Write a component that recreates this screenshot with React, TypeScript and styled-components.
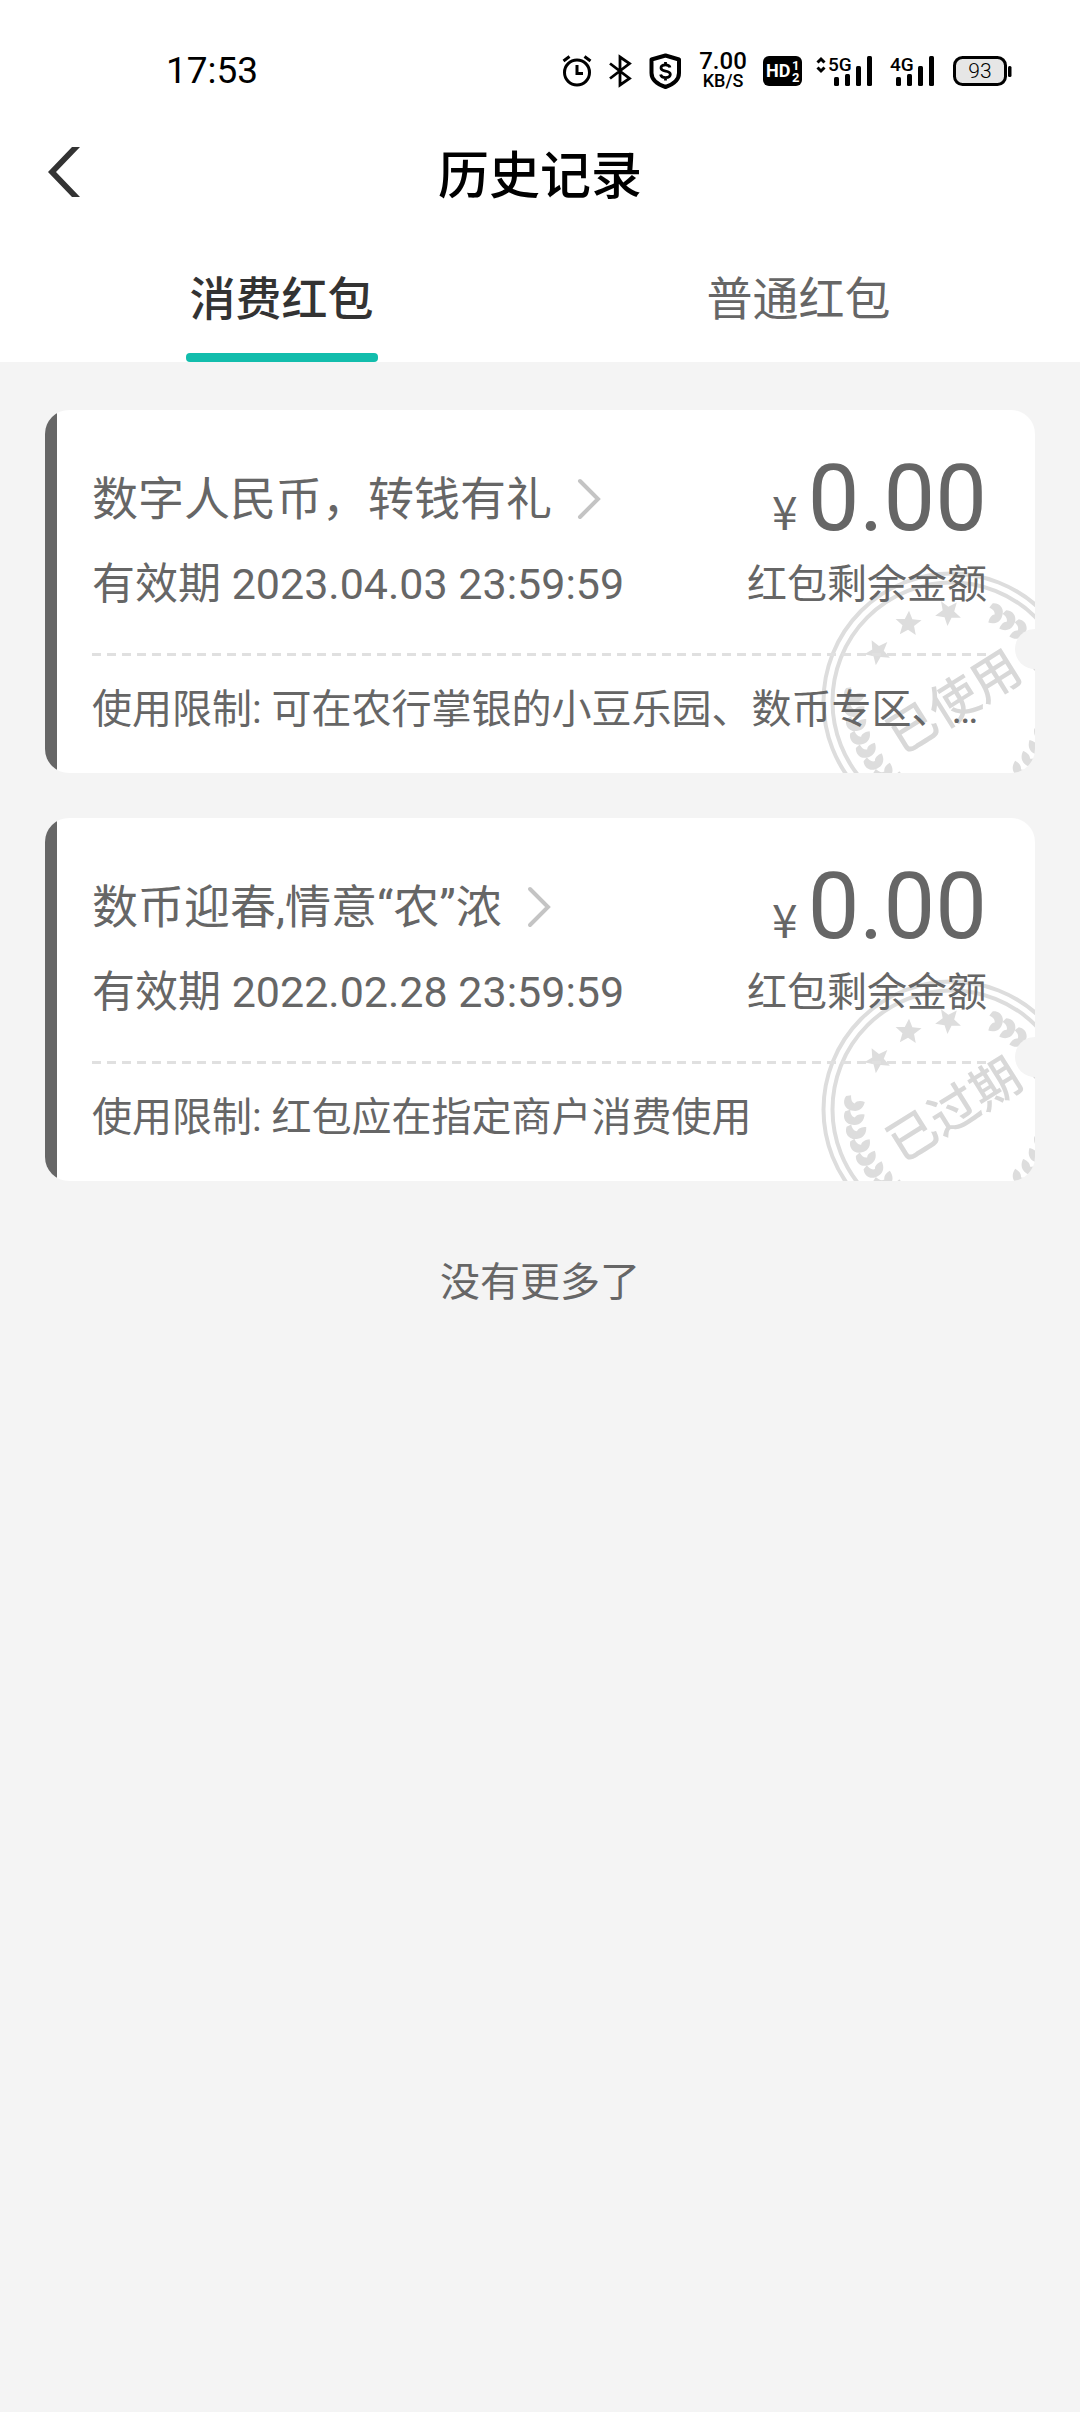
import React, { useState } from "react";
import styled, { createGlobalStyle } from "styled-components";

const sans = `Roboto, "Noto Sans CJK SC", sans-serif`;

const color = {
  page: "#f4f4f4",
  surface: "#ffffff",
  strong: "#333333",
  text: "#666666",
  accent: "#12bdac",
  line: "#e0e0e0",
  stamp: "#dddddd",
  chevron: "#c4c4c4",
};

const GlobalStyle = createGlobalStyle`
  *, *::before, *::after { box-sizing: border-box; }
  body {
    margin: 0;
    background: ${color.page};
    color: ${color.text};
    font-family: ${sans};
  }
  button {
    padding: 0;
    border: 0;
    background: none;
    color: inherit;
    font: inherit;
    cursor: pointer;
  }
  h1, h2, p { margin: 0; font: inherit; }
  svg { display: block; flex: none; overflow: visible; }
`;

const Page = styled.div`
  min-height: 100vh;
`;

const Header = styled.header`
  background: ${color.surface};
`;

const StatusBar = styled.div`
  display: flex;
  align-items: center;
  justify-content: space-between;
  height: 104px;
  padding: 38px 68px 0 166px;
  color: #000;
`;

const Clock = styled.time`
  font-size: 37px;
  line-height: 40px;
`;

const StatusIcons = styled.div`
  display: flex;
  align-items: center;
  gap: 14px;
`;

const Speed = styled.div`
  display: flex;
  flex-direction: column;
  align-items: center;
  width: 50px;
  font-weight: 500;
`;

const SpeedValue = styled.span`
  font-size: 24px;
  line-height: 20px;
`;

const SpeedUnit = styled.span`
  font-size: 18px;
  line-height: 20px;
`;

const NavBar = styled.div`
  display: grid;
  grid-template-columns: 96px 1fr 96px;
  align-items: center;
  height: 136px;
`;

const BackButton = styled.button`
  display: flex;
  align-items: center;
  height: 96px;
  padding-left: 48px;
`;

const Title = styled.h1`
  padding-top: 9px;
  color: #000;
  font-size: 51px;
  font-weight: 500;
  line-height: 72px;
  text-align: center;
`;

const Tabs = styled.div`
  display: flex;
  padding: 0 23px;
`;

const Tab = styled.button<{ $active: boolean }>`
  display: flex;
  flex: 1;
  flex-direction: column;
  align-items: center;
  justify-content: flex-end;
  gap: 18px;
  height: 122px;
  color: ${(p) => (p.$active ? color.strong : color.text)};
  font-size: 46px;
  font-weight: ${(p) => (p.$active ? 500 : 400)};
  line-height: 72px;

  &::after {
    content: "";
    width: 192px;
    height: 9px;
    border-radius: 4px;
    background: ${(p) => (p.$active ? color.accent : "transparent")};
  }
`;

const List = styled.main`
  display: flex;
  flex-direction: column;
  gap: 45px;
  padding: 48px 45px;
`;

const Card = styled.article`
  position: relative;
  overflow: hidden;
  padding: 0 48px 0 47px;
  border-radius: 24px;
  background: linear-gradient(to right, ${color.text} 12px, ${color.surface} 12px);

  &::after {
    content: "";
    position: absolute;
    top: 219px;
    right: -20px;
    width: 40px;
    height: 40px;
    border-radius: 50%;
    background: ${color.page};
  }
`;

const StampLayer = styled.div`
  position: absolute;
  top: 160px;
  right: -48px;
`;

const StampText = styled.text`
  fill: #d8d8d8;
  font-family: ${sans};
  font-size: 49px;
  font-weight: 500;
  text-anchor: middle;
`;

const Summary = styled.div`
  position: relative;
  display: flex;
  justify-content: space-between;
  padding: 53px 0 43px;
`;

const Column = styled.div<{ $end?: boolean }>`
  display: flex;
  flex-direction: column;
  align-items: ${(p) => (p.$end ? "flex-end" : "flex-start")};
  gap: 24px;
`;

const CardTitle = styled.button`
  display: flex;
  align-items: center;
  gap: 24px;
  font-size: 46px;
  line-height: 72px;
`;

const Validity = styled.p`
  font-size: 43px;
  line-height: 51px;
`;

const Amount = styled.p`
  display: flex;
  align-items: baseline;
  gap: 10px;
  height: 72px;
  font-size: 92px;
  line-height: 72px;
`;

const Currency = styled.span`
  font-family: "Noto Sans CJK SC", sans-serif;
  font-size: 46px;
`;

const AmountLabel = styled.p`
  font-size: 40px;
  line-height: 51px;
`;

const Divider = styled.div`
  position: relative;
  height: 3px;
  background: repeating-linear-gradient(
    to right,
    ${color.line} 0 9px,
    transparent 9px 15px
  );
`;

const Limit = styled.p`
  position: relative;
  overflow: hidden;
  padding: 26px 0 35px;
  font-size: 40px;
  line-height: 56px;
  text-overflow: ellipsis;
  white-space: nowrap;
`;

const EndNote = styled.p`
  padding-top: 29px;
  font-size: 40px;
  line-height: 56px;
  text-align: center;
`;

const AlarmIcon = () => (
  <svg width="30" height="32" viewBox="0 0 30 32" fill="none" stroke="#000" strokeWidth="3" aria-hidden="true">
    <circle cx="15" cy="17.5" r="12.5" />
    <path d="M15 10v8.5h6M1.5 6l6-4.500M28.500 6l-6-4.500" />
  </svg>
);

const BluetoothIcon = () => (
  <svg width="28" height="32" viewBox="0 0 28 32" fill="none" stroke="#000" strokeWidth="2.800" aria-hidden="true">
    <path d="M4 8.500L23.500 23.500L14 30V2L23.500 8.500L4 23.500" />
  </svg>
);

const ShieldIcon = () => (
  <svg width="36" height="36" viewBox="0 0 36 36" fill="none" stroke="#000" aria-hidden="true">
    <path d="M17.500 2.500L31 6.500V20C31 27 25 31.500 17.500 34C10 31.500 3.500 27 3.500 20V6.500Z" strokeWidth="4" strokeLinejoin="round" />
    <path d="M22 14.500C21.500 12.500 19.500 11.800 17.500 11.800C15 11.800 13 12.800 13 15C13 19.500 22.300 16.500 22.300 21.300C22.300 23.500 20 24.600 17.500 24.600C15 24.600 13 23.500 12.600 21.500M17.500 9v3M17.500 24.500v3" strokeWidth="2.800" />
  </svg>
);

const StatusText = styled.text`
  font-family: Roboto, sans-serif;
`;

const HdIcon = () => (
  <svg width="40" height="30" viewBox="0 0 40 30" role="img" aria-label="HD 1 2">
    <rect x="1" width="39" height="30" rx="6" fill="#000" />
    <StatusText x="4" y="21" fontSize="18" fontWeight="700" fill="#fff">HD</StatusText>
    <StatusText x="30" y="14" fontSize="13" fontWeight="700" fill="#fff">1</StatusText>
    <StatusText x="30" y="26" fontSize="13" fontWeight="700" fill="#fff">2</StatusText>
  </svg>
);

const SignalIcon = ({ label, arrows }: { label: string; arrows?: boolean }) => {
  const left = arrows ? 18 : 6;
  const width = arrows ? 60 : 46;
  return (
    <svg width={width} height="30" viewBox={`0 0 ${width} 30`} role="img" aria-label={`${label} signal`}>
      {arrows && <path d="M1.500 6.500L5 3L8.500 6.500M1.500 11.500L5 15L8.500 11.500" fill="none" stroke="#000" strokeWidth="3" />}
      <StatusText x={arrows ? 12 : 0} y="15" fontSize="19" fontWeight="500">{label}</StatusText>
      {[9, 12, 20, 30].map((h, i) => (
        <rect key={h} x={left + i * 11} y={30 - h} width="5" height={h} rx="1.500" />
      ))}
    </svg>
  );
};

const BatteryIcon = () => (
  <svg width="62" height="30" viewBox="0 0 62 30" role="img" aria-label="Battery 93">
    <rect x="4.500" y="1.500" width="51" height="27" rx="8" fill="#e6e6e6" stroke="#000" strokeWidth="3" />
    <rect x="58" y="10" width="3.500" height="11" rx="1.500" />
    <StatusText x="30" y="22" fontSize="21" fontWeight="300" textAnchor="middle">93</StatusText>
  </svg>
);

const BackIcon = () => (
  <svg width="34" height="50" viewBox="0 0 34 50" fill={color.strong} aria-hidden="true">
    <path d="M24 0H32L8 25L32 50H24L0 25Z" />
  </svg>
);

const ChevronIcon = () => (
  <svg width="26" height="44" viewBox="0 0 26 44" fill="none" stroke={color.chevron} strokeWidth="4" strokeLinecap="round" aria-hidden="true">
    <path d="M4 4L22 22L4 40" />
  </svg>
);

const STAR = "M0-13L3.800-4.500L13-4L5.800 2L8 11L0 6L-8 11L-5.800 2L-13-4L-3.800-4.500Z";
const LEAF = "M3-9L8-8C12-2 9 6 0 6.500C-6 7-10 3-11-3C-7-4-3-4-1-1C2-2 3-5 3-9Z";
const leafAngles = Array.from({ length: 14 }, (_, i) => 57 + i * 8.3);
const stars = [
  { angle: -27, tilt: 28 },
  { angle: 0, tilt: 32 },
  { angle: 27, tilt: 42 },
];

const Stamp = ({ label }: { label: string }) => (
  <StampLayer>
    <svg width="263" height="263" viewBox="-131.500 -131.500 263 263" fill={color.stamp}>
      <g fill="none" stroke={color.stamp} strokeWidth="4">
        <circle r="128" />
        <circle r="119" />
      </g>
      <g transform="rotate(-30)">
        {stars.map(({ angle, tilt }) => (
          <path key={angle} d={STAR} transform={`rotate(${angle + 1}) translate(0 -89) rotate(${tilt})`} />
        ))}
        {leafAngles.map((a) => (
          <g key={a}>
            <path d={LEAF} transform={`rotate(${a}) translate(0 -98) rotate(-90)`} />
            <path d={LEAF} transform={`scale(-1 1) rotate(${a}) translate(0 -98) rotate(-90)`} />
          </g>
        ))}
        <StampText x="2" y="19" transform="rotate(-2)">{label}</StampText>
      </g>
    </svg>
  </StampLayer>
);

type Packet = {
  title: string;
  validUntil: string;
  amount: string;
  limit: string;
  status: string;
};

const packets: Packet[] = [
  {
    title: "数字人民币，转钱有礼",
    validUntil: "2023.04.03 23:59:59",
    amount: "0.00",
    limit: "可在农行掌银的小豆乐园、数币专区、…",
    status: "已使用",
  },
  {
    title: "数币迎春,情意“农”浓",
    validUntil: "2022.02.28 23:59:59",
    amount: "0.00",
    limit: "红包应在指定商户消费使用",
    status: "已过期",
  },
];

const PacketCard = ({ packet }: { packet: Packet }) => (
  <Card>
    <Stamp label={packet.status} />
    <Summary>
      <Column>
        <CardTitle type="button">
          {packet.title}
          <ChevronIcon />
        </CardTitle>
        <Validity>有效期 {packet.validUntil}</Validity>
      </Column>
      <Column $end>
        <Amount>
          <Currency>¥</Currency>
          {packet.amount}
        </Amount>
        <AmountLabel>红包剩余金额</AmountLabel>
      </Column>
    </Summary>
    <Divider />
    <Limit>使用限制: {packet.limit}</Limit>
  </Card>
);

const tabs = ["消费红包", "普通红包"];

export default function App() {
  const [active, setActive] = useState(0);
  return (
    <Page>
      <GlobalStyle />
      <Header>
        <StatusBar>
          <Clock>17:53</Clock>
          <StatusIcons>
            <AlarmIcon />
            <BluetoothIcon />
            <ShieldIcon />
            <Speed>
              <SpeedValue>7.00</SpeedValue>
              <SpeedUnit>KB/S</SpeedUnit>
            </Speed>
            <HdIcon />
            <SignalIcon label="5G" arrows />
            <SignalIcon label="4G" />
            <BatteryIcon />
          </StatusIcons>
        </StatusBar>
        <NavBar>
          <BackButton type="button" aria-label="返回">
            <BackIcon />
          </BackButton>
          <Title>历史记录</Title>
        </NavBar>
        <Tabs role="tablist">
          {tabs.map((name, i) => (
            <Tab key={name} type="button" role="tab" aria-selected={i === active} $active={i === active} onClick={() => setActive(i)}>
              {name}
            </Tab>
          ))}
        </Tabs>
      </Header>
      <List>
        {packets.map((packet) => (
          <PacketCard key={packet.title} packet={packet} />
        ))}
        <EndNote>没有更多了</EndNote>
      </List>
    </Page>
  );
}
